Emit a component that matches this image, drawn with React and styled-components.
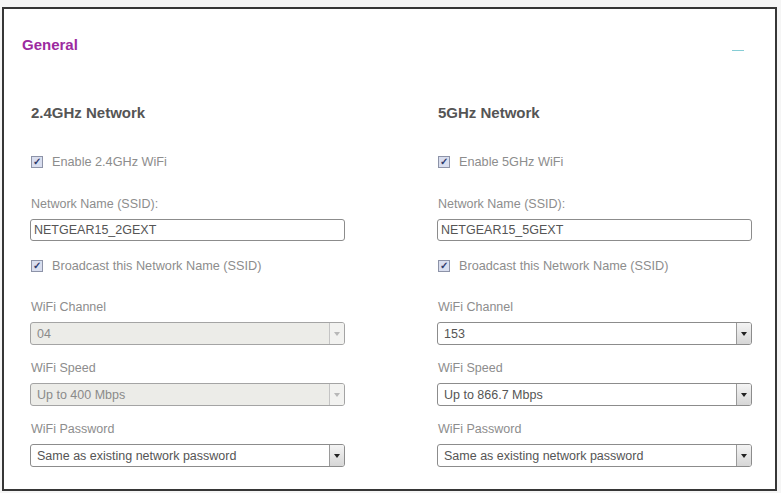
import React from "react";
import styled, { createGlobalStyle } from "styled-components";

const GlobalStyle = createGlobalStyle`
  html, body {
    margin: 0;
    padding: 0;
    background: #f5f5f5;
  }
  body {
    font-family: "Liberation Sans", Arial, Helvetica, sans-serif;
  }
`;

const Page = styled.div`
  width: 781px;
  height: 493px;
  padding: 7px 4px 2px 2px;
  box-sizing: border-box;
`;

const Frame = styled.section`
  height: 100%;
  box-sizing: border-box;
  border: 2px solid #363636;
  background: #fff;
`;

const Header = styled.div`
  display: flex;
  justify-content: space-between;
  align-items: center;
  padding: 28px 31px 0 18px;
`;

const Title = styled.h2`
  margin: 0;
  font-size: 15px;
  line-height: 16px;
  font-weight: 700;
  color: #9c2a9f;
`;

const Collapse = styled.span`
  display: block;
  width: 12px;
  height: 1px;
  margin-top: 10px;
  background: #86cdd5;
`;

const Columns = styled.div`
  display: grid;
  grid-template-columns: 315px 315px;
  column-gap: 92px;
  padding: 52px 0 0 26px;
`;

const Column = styled.div`
  display: flex;
  flex-direction: column;
`;

const Heading = styled.h3`
  margin: 0 0 34px 1px;
  font-size: 15px;
  line-height: 16px;
  font-weight: 700;
  color: #555;
`;

const CheckRow = styled.label`
  display: flex;
  align-items: center;
  gap: 9px;
  height: 14px;
  margin-left: 1px;
  margin-bottom: ${(p) => p.$after}px;
  font-size: 12.7px;
  color: #8d8d8d;
`;

const Box = styled.span`
  width: 10px;
  height: 10px;
  border: 1px solid #8d93a8;
  background: #d9deef;
  display: flex;
  align-items: center;
  justify-content: center;
  color: #2f3b6c;
  font-size: 10px;
  line-height: 10px;
  font-weight: 700;
`;

const Label = styled.div`
  margin: 0 0 8px 1px;
  font-size: 12.5px;
  line-height: 14px;
  color: #8d8d8d;
`;

const TextInput = styled.div`
  height: 22px;
  box-sizing: border-box;
  border: 1px solid #8c8c8c;
  border-radius: 3px;
  padding: 0 3px;
  display: flex;
  align-items: center;
  font-size: 12.5px;
  color: #555;
  margin-bottom: 18px;
`;

const Select = styled.div`
  height: 23px;
  box-sizing: border-box;
  border: 1px solid ${(p) => (p.$disabled ? "#a4a4a4" : "#8c8c8c")};
  border-radius: 3px;
  background: ${(p) => (p.$disabled ? "#ecece8" : "#fff")};
  display: flex;
  align-items: stretch;
  font-size: 12.5px;
  color: ${(p) => (p.$disabled ? "#8a8a8a" : "#555")};
  margin-bottom: ${(p) => p.$after}px;
  overflow: hidden;
`;

const Value = styled.span`
  flex: 1;
  display: flex;
  align-items: center;
  padding-left: 6px;
`;

const Arrow = styled.span`
  width: 14px;
  border-left: 1px solid ${(p) => (p.$disabled ? "#c4c4c4" : "#9a9a9a")};
  background: ${(p) =>
    p.$disabled
      ? "#f2f2f0"
      : "linear-gradient(#f4f4f4, #d6d6d6)"};
  display: flex;
  align-items: center;
  justify-content: center;
  &::after {
    content: "";
    border-left: 3px solid transparent;
    border-right: 3px solid transparent;
    border-top: 4px solid ${(p) => (p.$disabled ? "#b8b8b8" : "#222")};
  }
`;

const Check = ({ children, after }) => (
  <CheckRow $after={after}>
    <Box>✓</Box>
    {children}
  </CheckRow>
);

const Dropdown = ({ value, disabled, after = 16 }) => (
  <Select $disabled={disabled} $after={after}>
    <Value>{value}</Value>
    <Arrow $disabled={disabled} />
  </Select>
);

const Band = ({ title, band, ssid, channel, speed, disabled }) => (
  <Column>
    <Heading>{title}</Heading>
    <Check after={28}>Enable {band} WiFi</Check>
    <Label>Network Name (SSID):</Label>
    <TextInput>{ssid}</TextInput>
    <Check after={27}>Broadcast this Network Name (SSID)</Check>
    <Label>WiFi Channel</Label>
    <Dropdown value={channel} disabled={disabled} />
    <Label>WiFi Speed</Label>
    <Dropdown value={speed} disabled={disabled} />
    <Label>WiFi Password</Label>
    <Dropdown value="Same as existing network password" after={0} />
  </Column>
);

export default function App() {
  return (
    <Page>
      <GlobalStyle />
      <Frame>
        <Header>
          <Title>General</Title>
          <Collapse />
        </Header>
        <Columns>
          <Band
            title="2.4GHz Network"
            band="2.4GHz"
            ssid="NETGEAR15_2GEXT"
            channel="04"
            speed="Up to 400 Mbps"
            disabled
          />
          <Band
            title="5GHz Network"
            band="5GHz"
            ssid="NETGEAR15_5GEXT"
            channel="153"
            speed="Up to 866.7 Mbps"
          />
        </Columns>
      </Frame>
    </Page>
  );
}
